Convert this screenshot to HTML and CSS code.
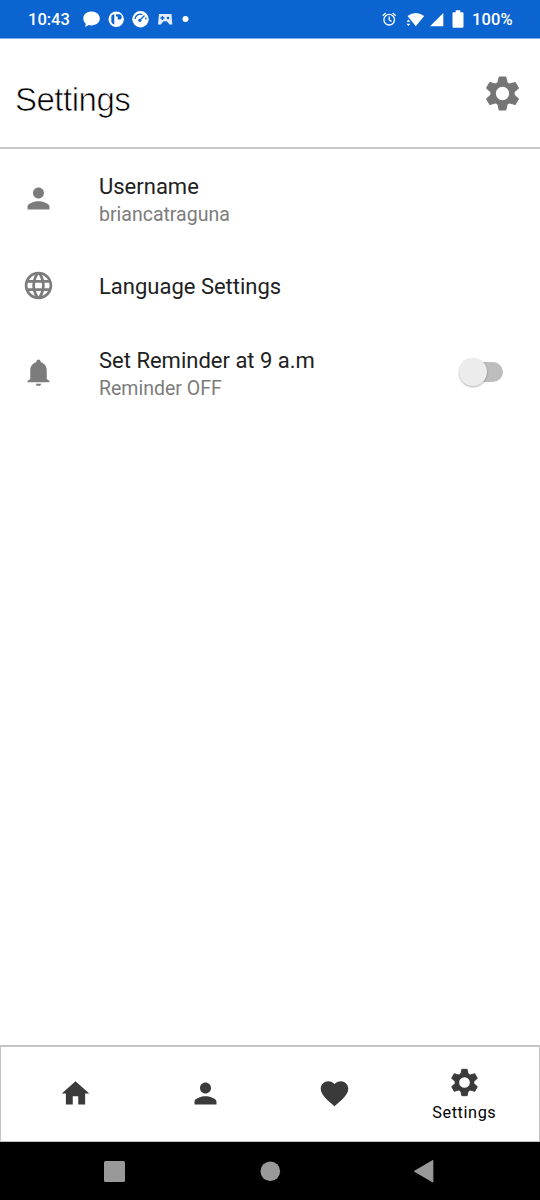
FILE: index.html
```html
<!DOCTYPE html>
<html lang="en">
<head>
<meta charset="utf-8">
<title>Settings</title>
<link rel="stylesheet" href="styles.css">
</head>
<body>
<svg class="defs" aria-hidden="true">
  <symbol id="gear" viewBox="-12 -12 24 24">
    <circle r="5.500" fill="none" stroke="currentColor" stroke-width="3.200"/>
    <g fill="currentColor" stroke="currentColor" stroke-width=".7" stroke-linejoin="round">
      <path d="M-2.700-6L-1.900-9.600h3.800L2.700-6z"/>
      <path d="M-2.700-6L-1.900-9.600h3.800L2.700-6z" transform="rotate(60)"/>
      <path d="M-2.700-6L-1.900-9.600h3.800L2.700-6z" transform="rotate(120)"/>
      <path d="M-2.700-6L-1.900-9.600h3.800L2.700-6z" transform="rotate(180)"/>
      <path d="M-2.700-6L-1.900-9.600h3.800L2.700-6z" transform="rotate(240)"/>
      <path d="M-2.700-6L-1.900-9.600h3.800L2.700-6z" transform="rotate(300)"/>
    </g>
  </symbol>
  <symbol id="person" viewBox="0 0 24 24"><path d="M12 12c2.210 0 4-1.790 4-4s-1.790-4-4-4-4 1.790-4 4 1.790 4 4 4zm0 2c-2.670 0-8 1.340-8 4v2h16v-2c0-2.660-5.330-4-8-4z"/></symbol>
</svg>
<div class="status-bar">
  <span class="clock">10:43</span>
  <svg class="notifications" width="110" height="20" viewBox="0 0 110 20">
    <path d="M9.500 1.500C4.500 1.500 1.300 4.700 1.300 8.500c0 2.300 1.100 4 2.500 5.200L3.200 17l3.600-1.900c5.800 1.300 11-1.900 11-6.600C17.800 4.700 14.300 1.500 9.500 1.500z"/>
    <circle cx="34.200" cy="9.300" r="7.700"/>
    <path d="M32.300 4.300v10.300a4 4 0 0 1-3-4V7.300q0-3 3-3zM34 4.300h3q2.700 0 2.700 2.600T37 9.500h-1.300v-3H34z" fill="#0b64d0"/>
    <circle cx="58.500" cy="9.300" r="8.200"/>
    <path d="M53 9a5.500 5.500 0 0 1 7.500-4.500M63.600 7.500q.4.800.4 2M57.500 10.500l5-5" fill="none" stroke="#0b64d0" stroke-width="1.300"/>
    <circle cx="57.800" cy="10.300" r="1.600" fill="#0b64d0"/>
    <path fill-rule="evenodd" opacity=".88" d="M77 4h12.500l.8 10.500h-2.800l-2.700-3.200h-3.300l-2.700 3.200H76zM79.700 6v1.300h-1.300v1.400h1.300V10h1.400V8.700h1.300V7.300h-1.300V6zM86 6.700a1.300 1.300 0 1 0 .1 2.600A1.300 1.300 0 0 0 86 6.700z"/>
    <circle cx="103.500" cy="9" r="3"/>
  </svg>
  <span class="spacer"></span>
  <svg class="system" width="86" height="20" viewBox="0 0 86 20">
    <g fill="none" stroke="#fff" stroke-width="1.300"><circle cx="9.200" cy="9.700" r="5.300"/><path d="M9.200 6.500V10l2.300 1.400M2.700 5.800l3-2.700M15.700 5.800l-3-2.700"/></g>
    <path d="M27.500 6q8.200-6 16.700 0L35.800 16.300z"/>
    <path d="M28.400 9.500l1.900 2.200h-3.800zM28.400 15.900l-1.900-2.200h3.800z"/>
    <path d="M63.300 3v13.300H50z"/>
    <path d="M75.700 .3h4.600v1.900h2.200q1 0 1 1V16.700q0 1-1 1h-9q-1 0-1-1V3.200q0-1 1-1h2.200z"/>
  </svg>
  <span class="battery">100%</span>
</div>
<header class="header">
  <h1>Settings</h1>
  <svg class="header-gear"><use href="#gear"/></svg>
</header>
<main class="list">
  <div class="row user">
    <svg class="icon"><use href="#person"/></svg>
    <div class="copy"><div class="title">Username</div><div class="sub">briancatraguna</div></div>
  </div>
  <div class="row language">
    <svg class="icon" viewBox="0 0 24 24"><path d="M11.990 2C6.470 2 2 6.480 2 12s4.470 10 9.990 10C17.520 22 22 17.520 22 12S17.520 2 11.990 2zm6.930 6h-2.950c-.32-1.250-.78-2.450-1.380-3.560 1.840.63 3.370 1.910 4.330 3.560zM12 4.040c.83 1.200 1.480 2.530 1.910 3.960h-3.820c.43-1.430 1.080-2.760 1.910-3.960zM4.260 14C4.100 13.360 4 12.690 4 12s.1-1.360.26-2h3.380c-.08.66-.14 1.320-.14 2s.06 1.340.14 2H4.260zm.82 2h2.950c.32 1.250.78 2.450 1.380 3.560-1.840-.63-3.370-1.900-4.330-3.560zm2.950-8H5.080c.96-1.660 2.490-2.930 4.330-3.560C8.810 5.550 8.350 6.750 8.030 8zM12 19.960c-.83-1.200-1.480-2.530-1.910-3.960h3.820c-.43 1.430-1.080 2.760-1.910 3.960zM14.340 14H9.660c-.09-.66-.16-1.320-.16-2s.07-1.350.16-2h4.680c.09.65.16 1.320.16 2s-.07 1.340-.16 2zm.25 5.560c.6-1.110 1.060-2.310 1.380-3.560h2.950c-.96 1.650-2.490 2.930-4.330 3.560zM16.360 14c.08-.66.14-1.320.14-2s-.06-1.340-.14-2h3.380c.16.640.26 1.310.26 2s-.1 1.360-.26 2h-3.380z"/></svg>
    <div class="copy"><div class="title">Language Settings</div></div>
  </div>
  <div class="row reminder">
    <svg class="icon" viewBox="0 0 24 24"><path d="M9.900 20.200h4.200q-.5 1.600-2.100 1.600t-2.100-1.600zM18 16.800V10.500c0-3-1.600-5.200-4.300-6C13.500 3.300 12.800 2.500 12 2.500s-1.500.8-1.700 2C7.600 5.300 6 7.500 6 10.500v6.300l-2 1.400v.8h16v-.8z"/></svg>
    <div class="copy"><div class="title">Set Reminder at 9 a.m</div><div class="sub">Reminder OFF</div></div>
    <div class="switch"><span class="thumb"></span></div>
  </div>
</main>
<nav class="tabs">
  <div class="tab"><svg class="tab-icon" viewBox="0 0 24 24"><path d="M10 20v-6h4v6h5v-8h3L12 3 2 12h3v8z"/></svg></div>
  <div class="tab"><svg class="tab-icon"><use href="#person"/></svg></div>
  <div class="tab"><svg class="tab-icon" viewBox="0 0 24 24"><path d="M12 21.350l-1.450-1.320C5.400 15.360 2 12.280 2 8.500 2 5.420 4.420 3 7.500 3c1.740 0 3.410.81 4.500 2.090C13.090 3.810 14.760 3 16.500 3 19.580 3 22 5.420 22 8.500c0 3.780-3.400 6.860-8.550 11.540L12 21.350z"/></svg></div>
  <div class="tab active"><svg class="tab-icon"><use href="#gear"/></svg><span class="tab-label">Settings</span></div>
</nav>
<div class="system-nav">
  <svg width="540" height="58" viewBox="0 0 540 58">
    <rect x="104" y="19" width="21" height="21" rx="1.500"/>
    <circle cx="270.300" cy="29.300" r="9.800"/>
    <path d="M414.700 29.300l18-10.500v21z" stroke="#999" stroke-width="1.300" stroke-linejoin="round"/>
  </svg>
</div>
</body>
</html>
```
FILE: styles.css
```css
* { box-sizing: border-box; }
body {
  margin: 0;
  width: 540px;
  height: 1200px;
  display: flex;
  flex-direction: column;
  overflow: hidden;
  background: #fff;
  font-family: Roboto, "Liberation Sans", sans-serif;
}
svg { display: block; flex: none; }
.defs { width: 0; height: 0; position: absolute; }
.status-bar {
  height: 39px;
  flex: none;
  display: flex;
  align-items: center;
  padding: 1px 27px 0 28px;
  background: #0b64d0;
  border-bottom: 1px solid #7fadea;
  color: #fff;
  font-size: 16.500px;
  font-weight: 500;
}
.status-bar svg { fill: #fff; }
.clock { width: 42px; }
.notifications { margin-left: 12px; }
.spacer { flex: 1; }
.system { margin-right: 6px; }
.battery { width: 41px; letter-spacing: .1px; }
.header {
  height: 110px;
  flex: none;
  display: flex;
  align-items: center;
  justify-content: space-between;
  padding: 0 17px 0 15px;
  border-bottom: 2px solid #c8c8c8;
}
h1 {
  margin: 14px 0 0;
  font: 400 33px/40px "Liberation Sans", Arial, sans-serif;
  letter-spacing: -.5px;
  color: #000;
  -webkit-text-stroke: .7px #fff;
}
.header-gear { width: 41px; height: 41px; color: #757575; }
.list { flex: 1; }
.row {
  display: flex;
  align-items: center;
  padding: 0 37px 0 22px;
}
.user { height: 99px; }
.language { height: 74px; }
.reminder { height: 100px; }
.icon { width: 33px; height: 33px; margin-right: 44px; fill: #7c7c7c; }
.copy { flex: 1; padding-top: 3px; }
.reminder .copy { padding-top: 5px; }
.title { font-size: 22px; line-height: 28px; color: #212121; white-space: nowrap; }
.sub { font-size: 19.500px; line-height: 27px; color: #7c7c7c; white-space: nowrap; }
.switch {
  position: relative;
  width: 37px;
  height: 20px;
  border-radius: 10px;
  background: #bdbdbd;
}
.thumb {
  position: absolute;
  left: -7px;
  top: -4px;
  width: 28px;
  height: 28px;
  border-radius: 50%;
  background: #ececec;
  box-shadow: 0 1px 2px rgba(0, 0, 0, .3);
}
.tabs {
  height: 97px;
  flex: none;
  display: grid;
  grid-template-columns: repeat(4, 1fr);
  padding: 0 10px 1px;
  border: 1px solid #c4c4c4;
  border-top-width: 2px;
}
.tab {
  display: flex;
  flex-direction: column;
  align-items: center;
  justify-content: center;
}
.active { padding-top: 3px; }
.tab-icon { width: 33px; height: 33px; fill: #3a3a3a; color: #3a3a3a; }
.tab-label { font-size: 16.300px; line-height: 22px; letter-spacing: .6px; color: #000; margin-top: 3px; }
.system-nav { height: 58px; flex: none; background: #000; }
.system-nav svg { fill: #999; }
```
